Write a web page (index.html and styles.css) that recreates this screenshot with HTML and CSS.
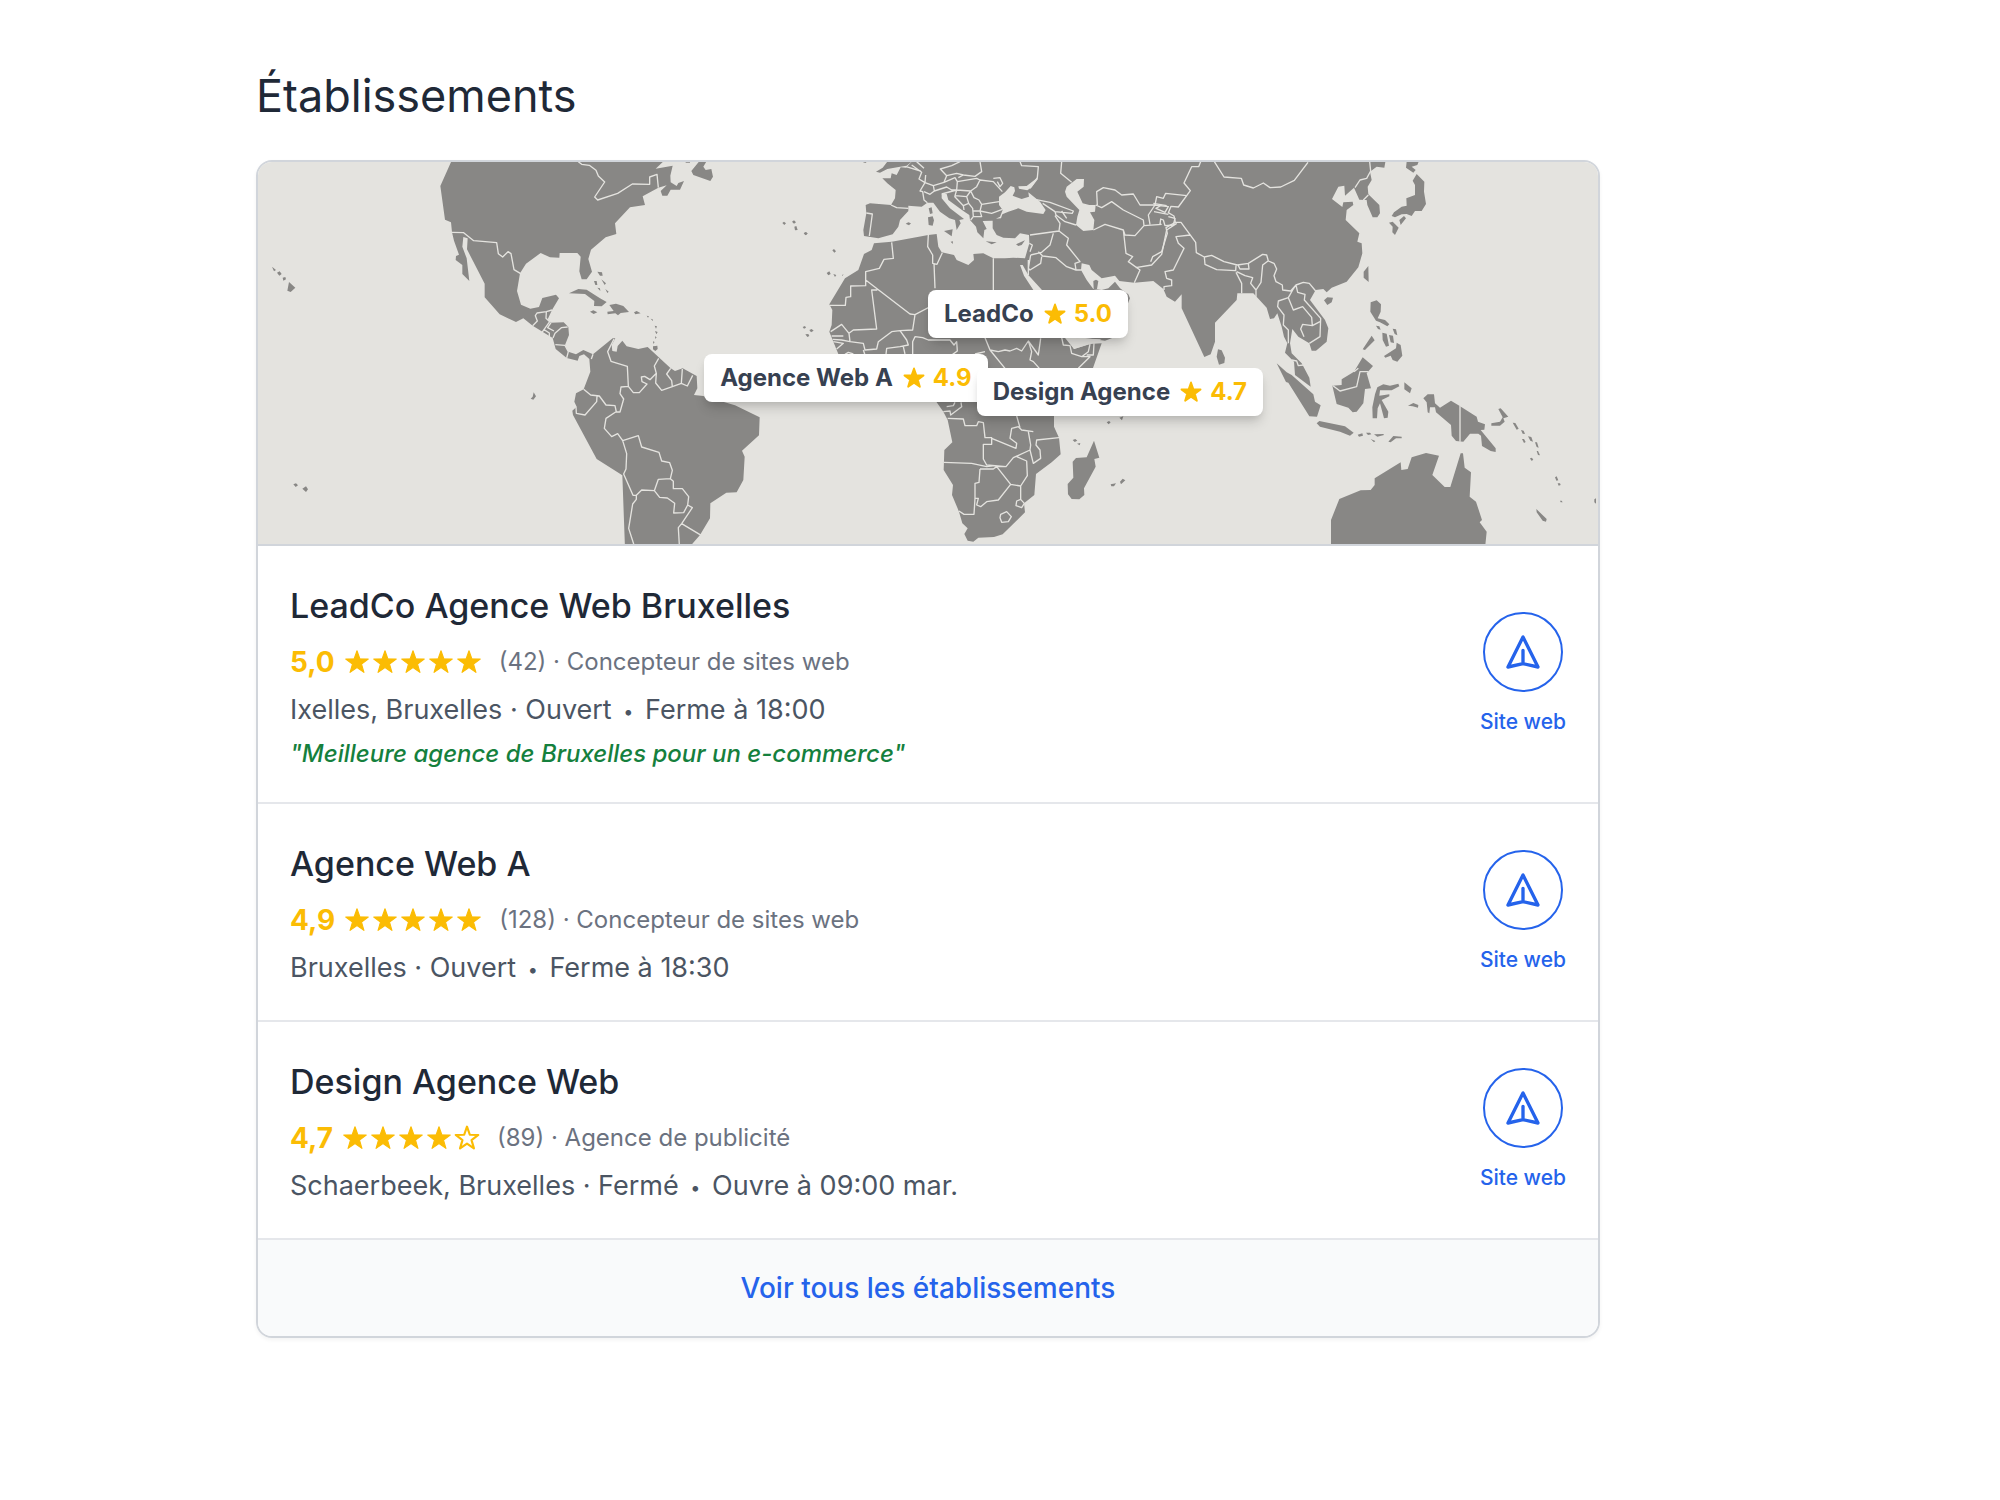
FILE: index.html
```
<!DOCTYPE html>
<html lang="fr">
<head>
    <meta charset="UTF-8">
    <meta name="viewport" content="width=device-width, initial-scale=1.0">
    <title>Établissements</title>
    <link rel="stylesheet" href="styles.css">
</head>
<body>
    <!-- Symboles réutilisés -->
    <svg class="symbols" aria-hidden="true">
        <symbol id="star" viewBox="0 0 24 24">
            <path d="M12 1.6l2.6 7.4 7.8.2-6.2 4.8 2.2 7.6-6.4-4.5-6.4 4.5 2.2-7.6-6.2-4.8 7.8-.2z"/>
        </symbol>
        <symbol id="nav" viewBox="0 0 24 24">
            <path d="M12 19l9 2-9-18-9 18 9-2zm0 0v-8"/>
        </symbol>
    </svg>

    <main class="page">
        <h1 class="title">Établissements</h1>

        <section class="card">
            <div class="map">
                <svg class="map-svg" viewBox="0 0 4020 1146" preserveAspectRatio="xMidYMid slice" aria-hidden="true">
                    <!-- Amériques -->
                    <g transform="translate(-24 -21)">
                        <path class="land" d="M608 10L571 93L585 194L603 202L606 232L612 257L627 299L618 303L617 315L637 330L637 357L658 378L650 310L637 275L640 246L653 250L651 283L704 386L704 427L749 478L798 501L820 490L848 512L908 549L917 582L950 609L983 617L988 603L1002 598L1018 612L1021 650L1001 703L978 715L973 740L980 755L967 767L969 780L1040 912L1117 961L1125 1180L1315 1180L1350 1140L1380 1090L1381 1045L1429 1013L1460 1012L1480 975L1484 905L1476 887L1527 841L1529 787L1455 751L1360 723L1332 720L1342 700L1340 663L1298 640L1275 648L1262 640L1193 576L1165 582L1130 574L1117 557L1103 573L1100 590L1087 588L1085 570L1096 550L1088 550L1029 598L1000 585L978 598L955 590L945 570L957 540L955 516L941 502L903 503L893 493L906 465L927 430L918 419L877 429L867 456L841 461L813 449L801 408L810 355L828 326L872 294L900 307L928 308L929 294L982 294L992 305L988 349L995 373L1010 373L1026 350L1015 312L1023 284L1067 247L1099 237L1095 205L1140 157L1185 150L1178 124L1225 98L1250 91L1232 108L1237 122L1252 122L1262 104L1290 104L1302 78L1285 84L1280 93L1262 82L1261 62L1268 32L1217 41L1250 10Z"/>
                        <path class="land" d="M1324 48L1355 10H1375L1360 35L1367 45L1384 42L1389 65L1381 78L1330 60ZM1300 15h20v8h-12z"/>
                        <!-- Caraïbes -->
                        <path class="land" d="M957 415L985 402L1010 404L1050 430L1070 441L1055 454L1032 453L1033 438L1005 417ZM1078 450L1098 446L1120 453L1137 471L1112 474L1104 481L1096 475L1073 478L1072 470L1091 468ZM1020 470L1030 466L1042 472L1031 477ZM1152 472L1160 468L1172 475L1156 478ZM1042 350L1056 352L1058 362L1050 362ZM1032 378L1040 378L1042 390L1036 390ZM1054 373L1068 385L1064 390ZM1042 398l8 2l1 8zM1066 402l10 8l-4 4zM1209 574L1222 572L1223 582L1216 588L1209 583ZM1190 482l7 2l-3 4zM1202 491l6 2l1 6zM1214 512l7 2l-3 7zM1215 528l8 3l-4 7zM1215 544l5 3l-4 5zM1209 559l5 2l-4 6z"/>
                        <!-- Îles du Pacifique -->
                        <path class="land" d="M66 335L78 345L72 349ZM81 353l8 -4l6 8l-7 5zM98 368l8 -2l2 7l-8 4zM117 381L136 398L122 411L112 407ZM130 988l8 -3l6 6l-7 5zM157 1001L168 994L174 1003L168 1011ZM851 712L858 724L850 734L842 731L848 725Z"/>
                        <path class="land" d="M1597 204l5 -4l6 5l-5 5zM1626 200l6 -4l6 6l-6 4zM1633 215l6 -2l4 12l-8 1zM1661 234l7 -3l5 5l-7 5zM1747 286l5 -4l6 7l-5 4zM1730 354l8 -5l4 8l-7 4zM1750 357l9 3l-4 6zM1776 360l5 -2l-4 5z"/>
                        <path class="border" d="M985 20L995 28L1018 31L1038 46L1045 63L1064 81L1034 126L1043 135L1103 115L1147 87L1199 88L1199 66L1221 58L1225 98M606 232L641 233L671 257L740 263L745 296L758 306L774 290L783 296L792 344L812 356M906 465L889 470L861 474L856 482L862 498L848 512M889 472L888 490L899 500L876 532M903 503L893 518L912 528M882 524L898 534L898 546M953 516L934 518L915 535L909 549M945 571L916 569M945 571L955 590L950 609M1029 598L1024 612M1092 552L1073 590L1083 619L1132 634L1135 694L1113 696L1110 716L1121 732L1110 771L1099 771L1095 752L1068 750L1048 723L1022 720L1001 703M1135 694L1150 713L1168 713L1191 687L1176 680L1174 666L1184 664L1200 674L1219 655L1213 633L1226 610M1219 655L1217 684L1235 706L1267 695L1265 677L1250 657L1262 640M1267 695L1294 685L1297 642M1294 685L1312 693L1328 661M1041 723L1040 740L1005 780L979 775L978 755M1097 771L1068 790L1063 820L1085 845L1103 836L1118 857L1165 842L1175 876L1227 892L1235 918L1259 923L1267 946L1261 971L1225 973L1213 1007L1175 1005L1159 1021L1149 1021L1121 957L1128 942L1130 896L1118 857M1261 971L1270 979L1270 1001L1297 1001L1316 1025L1313 1050L1301 1073L1271 1074L1274 1045L1252 1029L1229 1027L1213 1007M1159 1021L1159 1033L1148 1047L1136 1120L1152 1170M1313 1050L1327 1058L1295 1106L1285 1118L1288 1170M1295 1106L1355 1142"/>
                    </g>

                    <!-- Europe, Afrique et Asie -->
                    <g transform="translate(1626 -21)">
                        <path class="land" d="M345 10L318 38L302 37L290 60L275 55L272 70L247 70L262 85L287 105L285 130L273 150L210 145L197 150L199 175L190 225L192 243L235 250L278 238L295 215L300 195L325 168L325 152L365 155L382 143L400 143L420 170L448 190L465 195L470 225L482 205L478 195L492 192L450 160L425 130L425 117L440 117L445 135L490 168L508 180L510 195L528 215L532 232L550 250L553 225L560 222L548 198L575 197L600 185L608 165L597 150L597 125L615 112L632 93L643 97L645 108L638 122L665 132L687 125L685 112L720 140L737 165L730 177L680 170L655 160L625 170L607 178L603 190L578 192L578 220L590 240L610 248L645 250L660 235L687 240L688 265L675 310L640 308L615 310L580 310L550 295L520 297L522 315L505 330L470 315L462 300L425 292L415 275L410 237L385 240L275 260L222 265L215 285L192 297L175 345L135 370L88 448L97 465L95 510L88 530L100 560L115 597L180 650L380 640L410 742L430 770L443 795L457 862L433 885L431 945L459 990L456 1020L477 1070L487 1105L503 1120L493 1137L503 1157L520 1160L535 1148L582 1146L608 1138L675 1072L672 1045L703 1020L708 957L755 922L782 898L777 848L762 815L762 780L790 740L875 650L905 565L870 567L822 582L808 560L825 550L850 548L915 557L935 550L950 530L990 430L985 418L960 400L945 380L925 400L905 405L880 402L860 375L843 345L845 325L868 330L875 345L905 370L945 362L958 378L1003 383L1060 378L1090 402L1100 425L1125 440L1145 418L1145 460L1213 606L1232 598L1245 560L1245 503L1310 435L1312 415L1360 415L1400 458L1410 492L1422 490L1432 475L1445 515L1452 545L1462 565L1455 593L1482 620L1485 660L1532 695L1528 668L1505 625L1475 595L1470 565L1477 522L1495 545L1528 565L1535 587L1548 587L1580 560L1585 520L1575 495L1530 435L1547 405L1570 402L1580 412L1595 398L1640 380L1675 337L1687 295L1685 265L1672 260L1678 235L1637 195L1640 165L1660 150L1658 140L1630 142L1627 156L1596 132L1615 95L1633 92L1635 122L1662 98L1678 134L1700 135L1702 150L1718 187L1732 187L1740 175L1738 150L1705 118L1703 95L1715 75L1710 50L1730 35L1753 38L1758 10Z"/>
                        <!-- Mers intérieures -->
                        <path class="sea" d="M795 110L800 95L830 72L852 72L851 95L832 110L848 145L868 150L887 150L885 170L870 172L883 195L880 225L850 228L828 210L832 185L838 165L800 125ZM655 94L680 93L712 68L714 72L695 97L682 106L657 101ZM660 330L668 330L685 360L732 412L795 510L830 550L905 553L870 567L822 582L780 530L700 405L672 362Z"/>
                        <!-- Îles -->
                        <path class="land" d="M228 50L248 38L262 20H335L320 32L296 36L262 42L240 53ZM180 18h24l-8 6zM386 160l9 -3l3 18l-8 2zM384 187l14 -3l4 12l-4 16l-12 -2zM317 206l8 -4l8 3l-6 6zM432 228L458 223L455 244ZM452 260l7 -1l-1 8zM557 259L590 262L575 268ZM648 268L675 256L665 270L655 273ZM880 378l8 -4l7 4l-4 24h-10zM12 235l6 -3l5 4l-6 4zM882 857L898 908L883 912L887 935L852 1000L853 1020L838 1033L815 1032L804 1018L803 987L820 968L818 920L828 909L860 907ZM818 855l8 -3l6 5l-8 4zM831 866l10 -2l-2 7zM920 802l7 -4l5 4l-6 6zM958 788l12 -4l-4 12zM932 988l16 -3l-6 9h-8zM960 980l8 -9l8 5l-13 12zM8 516l7 -3l3 5l-6 3zM28 525l7 -3l6 5l-8 5zM16 538l9 -1l3 6l-6 3z"/>
                        <path class="border" d="M273 150L290 158L325 160M199 174L217 177L208 243M335 30L365 52L357 72L375 83L360 108L368 110L372 135L382 143M375 83L400 92L403 108L390 118L372 110M403 108L440 96L455 105L470 105L425 117M318 35L362 48M350 20L372 40M375 83L377 60M480 20L455 32L421 42L440 62L470 55L490 60L525 64L545 50L540 20M440 62L432 82L400 92M432 82L465 68L472 80L530 70L540 75L530 95L512 108L470 105L472 80M490 60L475 68M540 75L580 80L607 110M580 70L600 68L608 85L600 95L592 80M512 108L522 128L537 135L545 148L597 140M545 148L540 168L575 175L607 163M470 105L465 122L500 125L512 108M463 124L490 152L506 145L500 125M490 152L492 165M506 145L518 160L520 185L512 195M520 168L540 168L545 185L522 185M660 20L665 32L715 35L712 68L690 100M785 20L782 55L815 82M690 130L750 142L820 168L817 175L765 170L728 145M765 170L768 180L795 200L828 210M785 168L800 190M765 182L780 205L777 228L690 240M760 235L750 270L725 292L692 300M777 228L805 250L800 270L840 320L825 325L828 345L800 335L768 308L728 303L715 290M725 305L722 325L690 345L685 340L692 300M688 265L697 270L690 290M685 315L685 360M828 345L845 345M892 150L890 110L910 98L945 105L965 120L1000 117L1020 150L1065 150M887 150L905 158L935 140L970 165L1030 195L1032 212L1085 208M880 225L915 208L970 225L975 240L1005 242L1032 212M970 225L978 295L998 305L985 320L1020 345L1003 383M1007 338L1055 330L1085 298L1100 225L1130 205M1065 150L1045 180L1050 208M1065 150L1070 125L1090 130L1097 115L1160 122M1085 150L1068 160L1095 172L1105 155L1065 150M1080 208L1082 192L1090 195L1095 212L1120 210L1125 190L1105 185M580 310V410M402 325L405 400M385 240L383 275L398 300L398 325L411 328L427 293M275 262L280 310L252 313L238 340L197 350V392L152 393L152 425L138 427L136 451H90M197 375L330 477L345 479L400 450M232 405L215 405L230 522L160 525L147 535M345 479L338 525L300 527L275 530L235 560L230 582L195 585L190 565L150 560L147 535L125 508L92 530M95 543H130M98 553L125 555L150 560M300 527L320 555L325 570L300 575L260 580L258 598M338 597L338 560L345 545L368 548L385 555L450 555L462 570L470 560L472 588L458 598M315 597L310 575M555 548L570 585L595 590L615 585L630 588L650 580L665 588L685 558L695 590L690 615L700 620L718 640M555 590L525 597M570 585L615 640M685 558L715 600L722 550M785 548L790 570L810 572L815 595L845 605L870 605L835 640M845 605L865 590L870 567M860 600L880 600L882 565M190 585L195 600M100 560L130 565L110 582M135 598L145 592L160 597M443 790L490 792L495 812L530 812L535 800L550 803L555 848L575 848L575 868L550 868V912L560 930L618 935L640 908L690 885M431 922L515 925L560 935L585 932M575 850L648 880L650 865L630 850L635 820L655 815L665 825L700 830M650 783L660 818M685 830L692 870L690 885L700 925L722 910L720 885L708 870L710 855L777 848M540 942L580 942L590 935L632 988L595 1035L560 1040L542 1055L530 1050L535 1030H525L522 1078L492 1078L477 1068M540 942L537 982L525 985V1030M590 935L618 935M650 905L680 918L682 962L662 993L632 988M662 993V1033M650 1038L662 1033L673 1045L665 1058L648 1052ZM602 1078L620 1070L634 1085L625 1100L605 1102L600 1088ZM440 755L460 752L465 742M430 770L450 768L452 780L485 755L483 742"/>
                    </g>

                    <!-- Asie de l'Est et Océanie -->
                    <g transform="translate(2676 -21)">
                        <path class="land" d="M770 20H806L802 30L785 35L797 45L790 53L768 38ZM800 57L823 80L822 110L828 147L815 168L795 168L785 183L770 177L755 178L735 187L725 183L732 172L755 155L770 152L769 130L795 120L795 90L788 77ZM717 203L728 200L746 218L735 240L727 232L728 215ZM748 195L762 183L768 190L752 210ZM641 350L655 333L656 381L641 368ZM522 436L532 427L549 428L545 442L532 450ZM200 605L204 583L215 586L225 608L223 624L207 629ZM380 625L410 652L425 660L490 718L495 740L512 751L501 785L478 784L415 683L408 681ZM500 805L508 798L585 814L611 833L600 842L570 830L510 815ZM547 692L575 690L575 673L612 650L638 607L669 633L650 655L663 700L645 702L640 745L620 770L608 772L595 758L560 747ZM662 442L680 436L693 448L692 470L683 490L705 495L718 508L712 514L690 502L678 497L661 470ZM638 583L665 542L674 556L645 585ZM678 512l10 2l4 10l-8 -2zM697 533L710 536L717 572L708 575L698 555ZM717 540l12 2l3 22l-10 -2zM728 521l10 2l4 18l-8 -4zM702 603L738 580L740 563L752 570L757 602L742 620L728 615L722 602L706 608Z"/>
                        <path class="land" d="M668 790L667 757L675 718L682 697L700 688L720 692L745 686L748 694L725 706L690 706L688 722L718 718L718 724L695 735L715 770L713 788L702 790L690 745L683 760L681 790ZM763 682L785 700L780 715L763 703ZM774 752L790 744L805 750L804 758L788 754ZM820 730L833 718L852 718L855 745L870 758L903 737L928 752L980 785L984 800L1005 808L1003 824L992 825L1037 880L1037 891L1022 888L996 873L993 842L985 836H960L940 860L918 858L905 842L903 810L858 772L855 757L840 757L838 775L833 772L830 742ZM1024 805L1050 800L1058 787L1045 762L1052 760L1075 785L1060 790L1064 800L1050 812L1024 812ZM1088 803l8 1l10 17l-6 3zM1113 825l8 2l4 10l-7 -1zM1134 844l10 2l5 14l-8 -3zM1155 862l6 0l5 16l-6 -2zM1116 852l6 0l5 9l-5 3zM1160 888l4 0l6 13l-6 -1zM1140 910l6 -2l4 7l-6 2zM1215 967l5 -3l5 12l-6 1zM1223 985l7 0l2 5l-6 2zM1230 1037l5 0l3 5l-6 0zM1159 1062L1190 1092L1188 1100L1178 1097L1160 1072ZM1338 1030v16l-5 -4v-9z"/>
                        <path class="land" d="M623 839l14 -4l2 7l-12 3zM648 833l12 0l4 5l-10 2zM672 838L700 837L702 840L682 845ZM662 852l14 6l-4 4zM715 860L730 843L755 845L755 850L738 850L722 862ZM543 1180V1095L568 1032L632 1006L662 1005L674 990V970L752 922L754 945L773 942L785 907L828 894L867 902L847 960L884 996H901L932 895L939 895L944 938L963 952L959 1025L978 1040L996 1095L989 1102L1010 1130L1005 1180Z"/>
                        <path class="border" d="M190 15L222 66L274 70L281 90L310 99L340 84L360 98L392 96L433 76L474 22M152 20L146 35L125 35L102 84L121 107L85 156L63 154L55 173L72 183L76 202L93 202L137 262L139 293L163 306L185 301L222 320L262 330L295 325L338 298L350 300L355 318L372 325L380 342L372 362L378 380L397 390L398 405L422 408L438 390L460 382L478 385L497 408M163 306L165 328L200 344L257 347L258 332M265 332L270 342H297L295 325M258 352L275 385V415M260 350L285 362L308 368L302 385L318 405V425M354 318L338 330L333 382L318 405M12 170L55 178M10 145L50 152M121 240L78 245L85 265L102 280L70 345L45 350L50 370L65 375V392L42 395V405M76 202L48 218L52 235L35 290L8 305L2 320M415 428L385 438L383 455L402 480L400 510L415 525V565M415 428L428 405L438 390M415 428L430 465L458 455L485 487L487 512L458 508L452 522L462 545M438 390L443 412L465 418L463 435L512 490L510 545L478 565M487 512L510 500M425 615L440 618L445 632L460 630M549 692L570 708L620 695L630 650L655 650M612 650L625 640M930 752V860M659 20L662 48L650 70L630 75L615 98M640 135L655 120"/>
                    </g>
                </svg>

                <div class="pin pin-leadco">LeadCo <span class="pin-score"><svg class="pin-star"><use href="#star"/></svg>5.0</span></div>
                <div class="pin pin-agence">Agence Web A <span class="pin-score"><svg class="pin-star"><use href="#star"/></svg>4.9</span></div>
                <div class="pin pin-design">Design Agence <span class="pin-score"><svg class="pin-star"><use href="#star"/></svg>4.7</span></div>
            </div>

            <article class="place">
                <div class="place-info">
                    <h2 class="place-name">LeadCo Agence Web Bruxelles</h2>
                    <div class="rating">
                        <span class="score">5,0</span>
                        <span class="stars">
                            <svg class="star"><use href="#star"/></svg>
                            <svg class="star"><use href="#star"/></svg>
                            <svg class="star"><use href="#star"/></svg>
                            <svg class="star"><use href="#star"/></svg>
                            <svg class="star"><use href="#star"/></svg>
                        </span>
                        <span class="meta">(42) · Concepteur de sites web</span>
                    </div>
                    <p class="hours">Ixelles, Bruxelles · Ouvert <span class="dot">•</span> Ferme à 18:00</p>
                    <p class="quote">"Meilleure agence de Bruxelles pour un e-commerce"</p>
                </div>
                <a href="#" class="site">
                    <span class="site-circle"><svg class="site-icon"><use href="#nav"/></svg></span>
                    <span class="site-label">Site web</span>
                </a>
            </article>

            <article class="place">
                <div class="place-info">
                    <h2 class="place-name">Agence Web A</h2>
                    <div class="rating">
                        <span class="score">4,9</span>
                        <span class="stars">
                            <svg class="star"><use href="#star"/></svg>
                            <svg class="star"><use href="#star"/></svg>
                            <svg class="star"><use href="#star"/></svg>
                            <svg class="star"><use href="#star"/></svg>
                            <svg class="star"><use href="#star"/></svg>
                        </span>
                        <span class="meta">(128) · Concepteur de sites web</span>
                    </div>
                    <p class="hours">Bruxelles · Ouvert <span class="dot">•</span> Ferme à 18:30</p>
                </div>
                <a href="#" class="site">
                    <span class="site-circle"><svg class="site-icon"><use href="#nav"/></svg></span>
                    <span class="site-label">Site web</span>
                </a>
            </article>

            <article class="place">
                <div class="place-info">
                    <h2 class="place-name">Design Agence Web</h2>
                    <div class="rating">
                        <span class="score">4,7</span>
                        <span class="stars">
                            <svg class="star"><use href="#star"/></svg>
                            <svg class="star"><use href="#star"/></svg>
                            <svg class="star"><use href="#star"/></svg>
                            <svg class="star"><use href="#star"/></svg>
                            <svg class="star star-empty"><use href="#star"/></svg>
                        </span>
                        <span class="meta">(89) · Agence de publicité</span>
                    </div>
                    <p class="hours">Schaerbeek, Bruxelles · Fermé <span class="dot">•</span> Ouvre à 09:00 mar.</p>
                </div>
                <a href="#" class="site">
                    <span class="site-circle"><svg class="site-icon"><use href="#nav"/></svg></span>
                    <span class="site-label">Site web</span>
                </a>
            </article>

            <footer class="card-footer">
                <a href="#" class="all-link">Voir tous les établissements</a>
            </footer>
        </section>
    </main>
</body>
</html>
```
FILE: styles.css
```
* {
  box-sizing: border-box;
}

body {
  margin: 0;
  background-color: #ffffff;
  font-family: Inter, "Liberation Sans", sans-serif;
  color: #1f2937;
}

h1, h2, p {
  margin: 0;
}

a {
  color: #2563eb;
  text-decoration: none;
}

.symbols {
  display: none;
}

.page {
  max-width: 1344px;
  margin: 64px 32px 64px 256px;
}

.title {
  margin-bottom: 32px;
  font-size: 45px;
  line-height: 64px;
  font-weight: 400;
}

.card {
  border: 2px solid #d1d5db;
  border-radius: 16px;
  overflow: hidden;
  box-shadow: 0 2px 4px rgba(0, 0, 0, 0.05);
}

/* Carte du monde */
.map {
  position: relative;
  height: 384px;
  border-bottom: 2px solid #d1d5db;
  background-color: #e4e3df;
}

.map-svg {
  display: block;
  width: 100%;
  height: 100%;
}

.land {
  fill: #888785;
}

.sea {
  fill: #e4e3df;
}

.border {
  fill: none;
  stroke: #e4e3df;
  stroke-width: 4;
  stroke-linejoin: round;
}

/* Étiquettes posées sur la carte */
.pin {
  position: absolute;
  display: flex;
  align-items: center;
  gap: 10px;
  padding: 8px 16px;
  border-radius: 8px;
  background-color: #ffffff;
  box-shadow: 0 8px 12px -2px rgba(0, 0, 0, 0.15), 0 4px 8px -4px rgba(0, 0, 0, 0.12);
  color: #374151;
  font-size: 24px;
  line-height: 32px;
  font-weight: 700;
  white-space: nowrap;
}

.pin-leadco {
  left: 50%;
  top: 33.5%;
}

.pin-agence {
  left: 33.3%;
  top: 50.2%;
}

.pin-design {
  right: 25%;
  top: 54%;
}

.pin-score {
  display: flex;
  align-items: center;
  gap: 8px;
  color: #fbbc04;
}

.pin-star {
  width: 22px;
  height: 22px;
  fill: #fbbc04;
  stroke: #fbbc04;
  stroke-width: 2;
  stroke-linejoin: round;
}

/* Liste des établissements */
.place {
  display: flex;
  align-items: center;
  justify-content: space-between;
  padding: 32px;
  border-bottom: 2px solid #e5e7eb;
}

.place-name {
  font-size: 34px;
  line-height: 56px;
  font-weight: 500;
}

.rating {
  display: flex;
  align-items: center;
  margin-top: 8px;
  line-height: 40px;
}

.score {
  margin-right: 8px;
  color: #fbbc04;
  font-size: 28px;
  font-weight: 700;
}

.stars {
  display: flex;
  margin-right: 16px;
}

.star {
  width: 28px;
  height: 28px;
  padding: 1px;
  fill: #fbbc04;
  stroke: #fbbc04;
  stroke-linejoin: round;
}

.star-empty {
  fill: none;
  stroke-width: 2;
}

.meta {
  color: #6b7280;
  font-size: 24px;
}

.hours {
  margin-top: 8px;
  color: #4b5563;
  font-size: 27px;
  line-height: 40px;
}

.dot {
  margin: 0 4px;
  font-size: 18px;
  line-height: 1;
  vertical-align: middle;
}

.quote {
  margin-top: 8px;
  color: #15803d;
  font-size: 24px;
  line-height: 32px;
  font-style: italic;
  font-weight: 500;
}

.site {
  display: flex;
  flex-direction: column;
  align-items: center;
  gap: 16px;
}

.site-circle {
  display: flex;
  align-items: center;
  justify-content: center;
  width: 80px;
  height: 80px;
  border: 2px solid #2563eb;
  border-radius: 50%;
}

.site-icon {
  width: 40px;
  height: 40px;
  fill: none;
  stroke: #2563eb;
  stroke-width: 2;
  stroke-linecap: round;
  stroke-linejoin: round;
}

.site-label {
  font-size: 21px;
  line-height: 28px;
  font-weight: 500;
}

.card-footer {
  padding: 28px 32px;
  background-color: #f9fafb;
  text-align: center;
}

.all-link {
  display: block;
  font-size: 28px;
  line-height: 40px;
  font-weight: 500;
}
```
